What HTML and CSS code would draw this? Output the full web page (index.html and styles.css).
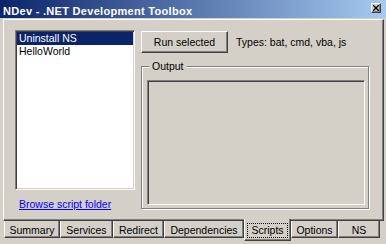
FILE: index.html
```html
<!DOCTYPE html>
<html lang="en">
<head>
<meta charset="utf-8">
<title>NDev - .NET Development Toolbox</title>
<link rel="stylesheet" href="styles.css">
</head>
<body>
<div class="window">
  <div class="titlebar">
    <span class="title">NDev - .NET Development Toolbox</span>
    <button class="close" aria-label="Close">
      <svg width="6" height="6" viewBox="0 0 6 6"><path d="M0 0L6 6M6 0L0 6" stroke="#000" stroke-width="1.4" fill="none"/></svg>
    </button>
  </div>
  <div class="tabpage">
    <div class="left">
      <ul class="listbox">
        <li class="item selected">Uninstall NS</li>
        <li class="item">HelloWorld</li>
      </ul>
      <a class="link" href="#">Browse script folder</a>
    </div>
    <div class="right">
      <div class="toolbar">
        <button class="btn">Run selected</button>
        <span class="types">Types: bat, cmd, vba, js</span>
      </div>
      <fieldset class="group">
        <legend>Output</legend>
        <div class="output"></div>
      </fieldset>
    </div>
  </div>
  <div class="tabs">
    <div class="tab">Summary</div>
    <div class="tab">Services</div>
    <div class="tab">Redirect</div>
    <div class="tab">Dependencies</div>
    <div class="tab active"><span class="focus">Scripts</span></div>
    <div class="tab">Options</div>
    <div class="tab">NS</div>
  </div>
</div>
</body>
</html>
```
FILE: styles.css
```css
* { box-sizing: border-box; }
html, body { margin: 0; padding: 0; }
body {
  font-family: "Liberation Sans", Arial, sans-serif;
  font-size: 10.5px;
  line-height: 13px;
  color: #000;
  background: #d4d0c8;
}
.window {
  width: 386px;
  height: 244px;
  background: #d4d0c8;
  overflow: hidden;
  display: flex;
  flex-direction: column;
}
.titlebar {
  flex: none;
  height: 18px;
  display: flex;
  align-items: flex-start;
  justify-content: space-between;
  padding: 0 5px 0 3px;
  background: linear-gradient(to right, #0a246a, #a6caf0);
}
.title {
  margin-top: 5px;
  color: #fff;
  font-weight: bold;
  font-size: 11px;
  line-height: 13px;
  letter-spacing: 0.3px;
  white-space: nowrap;
}
.close {
  margin-top: 3px;
  width: 10px;
  height: 10px;
  padding: 0;
  border: 1px solid;
  border-color: #fff #404040 #404040 #fff;
  box-shadow: inset -1px -1px 0 #808080;
  background: #d4d0c8;
  display: flex;
  align-items: center;
  justify-content: center;
}
.close svg { display: block; }
.tabpage {
  flex: none;
  margin: 1px 2px 0 3px;
  height: 202px;
  border: 1px solid;
  border-color: #fff #404040 #404040 #fff;
  box-shadow: inset -1px -1px 0 #808080;
  padding: 10px 0 0 11px;
  display: flex;
  gap: 6px;
}
.left {
  width: 120px;
  display: flex;
  flex-direction: column;
  align-items: flex-start;
}
.listbox {
  list-style: none;
  margin: 0;
  padding: 1px;
  width: 120px;
  height: 160px;
  background: #fff;
  border: 1px solid;
  border-color: #808080 #fff #fff #808080;
  box-shadow: inset 1px 1px 0 #404040, inset -1px -1px 0 #d4d0c8;
}
.item {
  height: 13px;
  padding-left: 2px;
  white-space: nowrap;
}
.item.selected { background: #0a246a; color: #fff; }
.link {
  margin: 8px 0 0 4px;
  color: #0000ff;
  text-decoration: underline;
  white-space: nowrap;
}
.right {
  display: flex;
  flex-direction: column;
}
.toolbar {
  margin-top: 1px;
  display: flex;
  align-items: center;
}
.btn {
  width: 87px;
  height: 22px;
  padding: 0;
  font: inherit;
  color: #000;
  background: #d4d0c8;
  border: 1px solid;
  border-color: #fff #404040 #404040 #fff;
  box-shadow: inset -1px -1px 0 #808080;
}
.types { margin-left: 8px; white-space: nowrap; }
.group {
  margin: 7px 0 0;
  width: 228px;
  min-width: 0;
  padding: 7px 3px 3px 5px;
  border: 1px solid #808080;
  box-shadow: 1px 1px 0 #fff, inset 1px 1px 0 #fff;
}
.group legend {
  margin-left: 2px;
  padding: 0 3px;
  line-height: 13px;
  background: #d4d0c8;
}
.output {
  width: 218px;
  height: 125px;
  background: #d4d0c8;
  border: 1px solid;
  border-color: #808080 #fff #fff #808080;
  box-shadow: inset 1px 1px 0 #404040, inset -1px -1px 0 #d4d0c8;
}
.tabs {
  flex: none;
  margin-left: 4px;
  display: grid;
  grid-template-columns: 56px 53px 51px 80px 47px 47px 42px;
  align-items: start;
}
.tab {
  height: 17px;
  padding-top: 3px;
  text-align: center;
  white-space: nowrap;
  border: 1px solid;
  border-top: 0;
  border-color: #fff #404040 #404040 #fff;
  box-shadow: inset -1px -1px 0 #808080;
  background: #d4d0c8;
}
.tab.active {
  position: relative;
  z-index: 1;
  margin-top: -2px;
  height: 22px;
  padding-top: 5px;
}
.focus {
  display: inline-block;
  padding: 0 3px;
  outline: 1px dotted #000;
}
```
